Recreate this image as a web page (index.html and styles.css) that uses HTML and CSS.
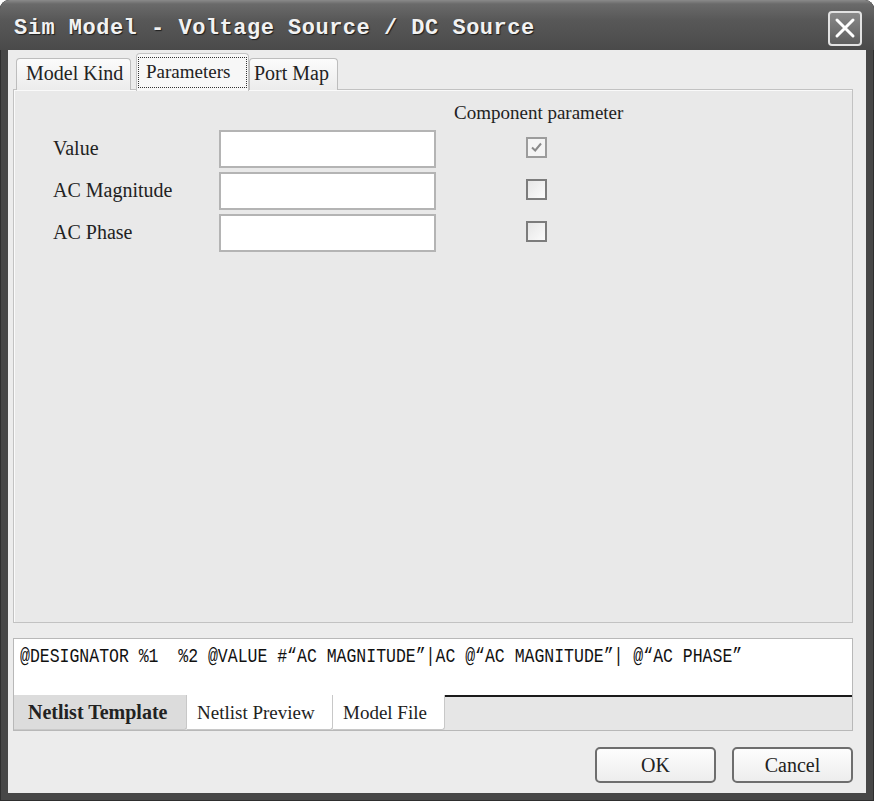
FILE: index.html
```html
<!DOCTYPE html>
<html>
<head>
<meta charset="utf-8">
<link rel="stylesheet" href="styles.css">
</head>
<body>
<div class="window">
  <div class="titlebar">
    <span class="title">Sim Model - Voltage Source / DC Source</span>
    <div class="close">
      <svg width="22" height="22" viewBox="0 0 22 22"><path d="M3 3 L19 19 M19 3 L3 19" stroke="#fff" stroke-width="3" stroke-linecap="round"/></svg>
    </div>
  </div>
  <div class="client">
    <div class="tabs">
      <div class="tab">Model Kind</div>
      <div class="tab active"><span class="focus">Parameters</span></div>
      <div class="tab">Port Map</div>
    </div>
    <div class="panel">
      <div class="hdr">Component parameter</div>
      <div class="row">
        <span class="label">Value</span>
        <div class="input"></div>
        <div class="check checked"><svg width="17" height="17" viewBox="0 0 17 17"><path d="M4 8.5 L7.2 11.5 L13 4.5" fill="none" stroke="#8a8a8a" stroke-width="2"/></svg></div>
      </div>
      <div class="row">
        <span class="label">AC Magnitude</span>
        <div class="input"></div>
        <div class="check"></div>
      </div>
      <div class="row">
        <span class="label">AC Phase</span>
        <div class="input"></div>
        <div class="check"></div>
      </div>
    </div>
    <div class="netlist">
      <div class="code"><span class="codetext">@DESIGNATOR %1  %2 @VALUE #“AC MAGNITUDE”|AC @“AC MAGNITUDE”| @“AC PHASE”</span></div>
      <div class="btabs">
        <div class="btab active">Netlist Template</div>
        <div class="btab">Netlist Preview</div>
        <div class="btab">Model File</div>
        <div class="bfill"></div>
      </div>
    </div>
    <div class="buttons">
      <div class="btn">OK</div>
      <div class="btn">Cancel</div>
    </div>
  </div>
</div>
</body>
</html>
```
FILE: styles.css
```css
html, body { margin: 0; padding: 0; background: #fff; overflow: hidden; }
.window {
  width: 874px; height: 801px; box-sizing: border-box;
  background: #474747;
  border-radius: 9px 9px 0 0;
  padding: 0 8px 8px 8px;
  display: flex; flex-direction: column;
  box-shadow: inset 0 0 0 1px #2e2e2e;
}
.titlebar {
  height: 50px; flex: none;
  margin: 0 -8px; padding: 0 12px 0 14px;
  border-radius: 9px 9px 0 0;
  background: linear-gradient(#8a8a8a 0px, #6a6a6a 4px, #585858 20px, #4a4a4a 50px);
  display: flex; align-items: center; justify-content: space-between;
}
.title {
  font-family: "Liberation Mono", monospace; font-weight: bold;
  font-size: 22px; letter-spacing: 0.5px;
  color: #f2f2f2; text-shadow: 1px 1px 1px #1e1e1e;
  margin-top: 7px;
}
.close {
  width: 30px; height: 31px; margin-top: 6px;
  border: 2px solid #e2e2e2; border-radius: 4px;
  background: linear-gradient(#8a8a8a, #5e5e5e);
  display: flex; align-items: center; justify-content: center;
}
.client {
  flex: 1; background: #ececec;
  display: flex; flex-direction: column;
  font-family: "Liberation Serif", serif; color: #222;
}
.tabs { height: 40px; flex: none; display: flex; align-items: flex-end; padding-left: 8px; position: relative; z-index: 2; }
.tab {
  box-sizing: border-box; height: 32px; padding: 0 0 0 9px; white-space: nowrap;
  border: 1px solid #bdbdbd; border-bottom: none; border-radius: 4px 4px 0 0;
  background: linear-gradient(#fbfbfb, #ececec);
  font-size: 20px; line-height: 28px; width: 115px;
}
.tab:nth-child(3) { width: 89px; padding: 0 0 0 4px; }
.tab.active {
  width: 113px; height: 38px; margin-left: 5px; margin-bottom: -1px;
  background: #f7f7f7; padding: 3px 1px 0 1px;
  border-color: #c4c4c4;
}
.focus {
  display: block; border: 1px dotted #333; height: 31px; line-height: 28px;
  padding-left: 7px; box-sizing: border-box; font-size: 19px;
}
.panel {
  margin: -1px 0 0 5px; width: 840px; height: 534px; box-sizing: border-box; flex: none;
  border: 1px solid #c2c2c2; background: #e9e9e9;
  box-shadow: inset 1px 1px 0 #fafafa;
  padding-top: 11px;
}
.hdr { margin-left: 440px; font-size: 19px; line-height: 24px; height: 24px; margin-bottom: 5px; }
.row { display: flex; align-items: center; height: 38px; margin-bottom: 4px; }
.label { width: 166px; margin-left: 39px; font-size: 20px; margin-top: -1px; }
.input {
  width: 217px; height: 38px; box-sizing: border-box;
  border: 2px solid #b4b4b4; background: #fff;
}
.check {
  width: 21px; height: 21px; box-sizing: border-box; margin-left: 90px; margin-top: -3px;
  border: 2px solid #7c7c7c; background: linear-gradient(135deg, #e6e6e6, #fbfbfb);
  display: flex; align-items: center; justify-content: center;
}
.check.checked { border-color: #9c9c9c; background: #f4f4f4; }
.netlist {
  margin: 15px 0 0 5px; width: 840px; height: 93px; flex: none; box-sizing: border-box;
  border: 1px solid #b8b8b8; display: flex; flex-direction: column; background: #e6e6e6;
}
.code {
  height: 56px; box-sizing: border-box; background: #fff; overflow: hidden;
  padding: 6px 0 0 6px; color: #111; white-space: pre;
}
.codetext {
  display: inline-block; transform: scaleX(0.785); transform-origin: left top;
  font-family: "Liberation Mono", monospace; font-size: 21px; letter-spacing: 0;
}
.btabs { display: flex; height: 35px; }
.btab {
  box-sizing: border-box; background: #fff; font-size: 19px; line-height: 35px;
  border-right: 1px solid #c8c8c8; border-bottom: 1px solid #c8c8c8;
  padding: 0 10px; border-radius: 0 0 3px 0;
}
.btab.active { background: #dcdcdc; font-weight: bold; font-size: 20px; width: 173px; padding-left: 14px; }
.btab:nth-child(2) { width: 146px; }
.btab:nth-child(3) { width: 112px; }
.bfill { flex: 1; border-top: 2px solid #1a1a1a; }
.buttons { display: flex; justify-content: flex-end; gap: 16px; margin-top: 16px; padding-right: 13px; }
.btn {
  width: 121px; height: 36px; box-sizing: border-box;
  border: 2px solid #6e6e6e; border-radius: 5px;
  background: linear-gradient(#fdfdfd, #ededed);
  font-size: 20px; line-height: 33px; text-align: center;
}
```
